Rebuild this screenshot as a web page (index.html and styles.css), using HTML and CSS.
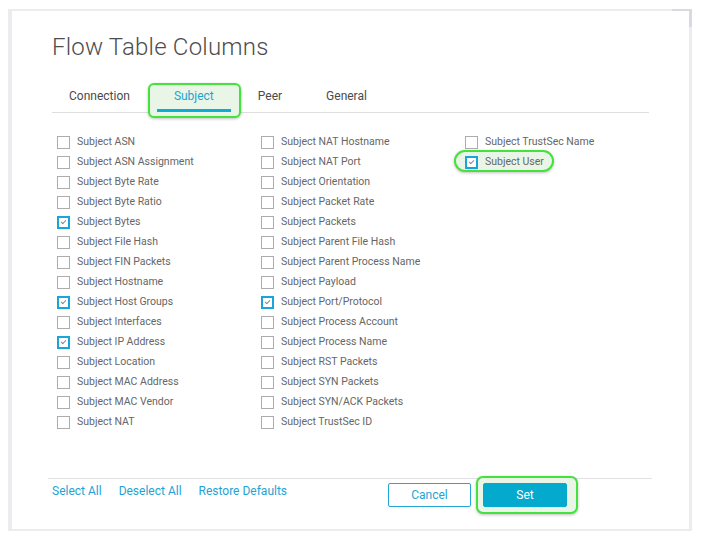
FILE: index.html
```html
<!DOCTYPE html>
<html>
<head>
<meta charset="utf-8">
<link rel="stylesheet" href="styles.css">
</head>
<body>
<div class="frame">
  <div class="scroll-mark"></div>
  <div class="modal">
    <h1 class="title">Flow Table Columns</h1>
    <div class="tabs">
      <div class="tab">Connection</div>
      <div class="hl hl-tab"><div class="tab active">Subject</div></div>
      <div class="tab">Peer</div>
      <div class="tab">General</div>
    </div>
    <div class="grid">
      <div class="col">
        <label class="item"><span class="box"></span>Subject ASN</label>
        <label class="item"><span class="box"></span>Subject ASN Assignment</label>
        <label class="item"><span class="box"></span>Subject Byte Rate</label>
        <label class="item"><span class="box"></span>Subject Byte Ratio</label>
        <label class="item"><span class="box on"></span>Subject Bytes</label>
        <label class="item"><span class="box"></span>Subject File Hash</label>
        <label class="item"><span class="box"></span>Subject FIN Packets</label>
        <label class="item"><span class="box"></span>Subject Hostname</label>
        <label class="item"><span class="box on"></span>Subject Host Groups</label>
        <label class="item"><span class="box"></span>Subject Interfaces</label>
        <label class="item"><span class="box on"></span>Subject IP Address</label>
        <label class="item"><span class="box"></span>Subject Location</label>
        <label class="item"><span class="box"></span>Subject MAC Address</label>
        <label class="item"><span class="box"></span>Subject MAC Vendor</label>
        <label class="item"><span class="box"></span>Subject NAT</label>
      </div>
      <div class="col">
        <label class="item"><span class="box"></span>Subject NAT Hostname</label>
        <label class="item"><span class="box"></span>Subject NAT Port</label>
        <label class="item"><span class="box"></span>Subject Orientation</label>
        <label class="item"><span class="box"></span>Subject Packet Rate</label>
        <label class="item"><span class="box"></span>Subject Packets</label>
        <label class="item"><span class="box"></span>Subject Parent File Hash</label>
        <label class="item"><span class="box"></span>Subject Parent Process Name</label>
        <label class="item"><span class="box"></span>Subject Payload</label>
        <label class="item"><span class="box on"></span>Subject Port/Protocol</label>
        <label class="item"><span class="box"></span>Subject Process Account</label>
        <label class="item"><span class="box"></span>Subject Process Name</label>
        <label class="item"><span class="box"></span>Subject RST Packets</label>
        <label class="item"><span class="box"></span>Subject SYN Packets</label>
        <label class="item"><span class="box"></span>Subject SYN/ACK Packets</label>
        <label class="item"><span class="box"></span>Subject TrustSec ID</label>
      </div>
      <div class="col">
        <label class="item"><span class="box"></span>Subject TrustSec Name</label>
        <label class="item hl hl-item"><span class="box on"></span>Subject User</label>
      </div>
    </div>
    <div class="footer">
      <div class="links">
        <a class="link">Select All</a>
        <a class="link">Deselect All</a>
        <a class="link">Restore Defaults</a>
      </div>
      <div class="buttons">
        <button class="btn cancel">Cancel</button>
        <div class="hl hl-btn"><button class="btn set">Set</button></div>
      </div>
    </div>
  </div>
</div>
</body>
</html>
```

FILE: styles.css
```css
html, body {
  background: #ffffff;
}
body {
  margin: 9px 10px 0 8px;
  font-family: Roboto, "Liberation Sans", sans-serif;
}
.frame {
  position: relative;
  height: 518px;
  border-style: solid;
  border-color: #ebebf0;
  border-width: 2px 3px 2px 4px;
  background: #ffffff;
}
.scroll-mark {
  position: absolute;
  top: -2px;
  right: -3px;
  width: 20px;
  height: 2px;
  background: #d9d9df;
}
.scroll-mark::after {
  content: "";
  position: absolute;
  right: 0;
  top: 0;
  width: 3px;
  height: 18px;
  background: #d9d9df;
}
.modal {
  padding: 22px 40px 0 40px;
}
.title {
  margin: 0;
  font-size: 24px;
  line-height: 28px;
  font-weight: 300;
  color: #4d4d4d;
  letter-spacing: 0.2px;
}
.tabs {
  display: flex;
  gap: 10px;
  margin-top: 27px;
  border-bottom: 1px solid #dedede;
}
.tab {
  padding: 0 17px 5px 17px;
  font-size: 12px;
  line-height: 16px;
  color: #4a4a4a;
  border-bottom: 3px solid transparent;
}
.tab.active {
  color: #1ea3cf;
  border-bottom-color: #0aaed2;
}
.hl {
  position: relative;
  z-index: 0;
}
.hl::before {
  content: "";
  position: absolute;
  z-index: -1;
  border: 2px solid #44e23a;
  border-radius: 6px;
  background: #e9f6e7;
  box-shadow: 0 1px 3px rgba(0,0,0,0.25);
}
.hl-tab::before {
  top: -5px;
  bottom: -6px;
  left: -9px;
  right: -10px;
}
.grid {
  display: grid;
  grid-template-columns: 204px 204px 204px;
  padding-left: 5px;
  margin-top: 18px;
}
.col {
  display: flex;
  flex-direction: column;
  align-items: flex-start;
}
.item {
  display: flex;
  align-items: center;
  height: 20px;
  font-size: 10.5px;
  color: #666666;
}
.box {
  position: relative;
  box-sizing: border-box;
  width: 13px;
  height: 13px;
  margin: 2px 7px 0 0;
  border: 1.5px solid #acacac;
  background: #ffffff;
}
.box.on {
  border: 2px solid #1aa5da;
}
.box.on::after {
  content: "";
  position: absolute;
  left: 2px;
  top: 2px;
  width: 4px;
  height: 2px;
  border-left: 1px solid #8a8a8a;
  border-bottom: 1px solid #8a8a8a;
  transform: rotate(-45deg);
}
.hl-item::before {
  top: -1px;
  bottom: -1px;
  left: -11px;
  right: -10px;
  border-radius: 11px;
}
.footer {
  display: flex;
  align-items: flex-start;
  margin: 47px -3px 0 -4px;
  padding: 4px 0 0 4px;
  border-top: 1px solid #e2e2e6;
}
.links {
  display: flex;
  gap: 17px;
}
.link {
  font-size: 12px;
  line-height: 16px;
  color: #1ea3d6;
  cursor: pointer;
}
.buttons {
  display: flex;
  gap: 12px;
  margin-left: auto;
  margin-right: 85px;
}
.btn {
  display: block;
  box-sizing: border-box;
  width: 83px;
  height: 24px;
  border-radius: 2px;
  font-family: Roboto, "Liberation Sans", sans-serif;
  font-size: 12px;
  padding: 0;
}
.cancel {
  background: #ffffff;
  border: 1px solid #22a6d6;
  color: #1ea3d6;
}
.set {
  width: 84px;
  background: #03aace;
  border: 1px solid #03aace;
  color: #ffffff;
}
.hl-btn::before {
  top: -7px;
  bottom: -7px;
  left: -7px;
  right: -11px;
  border-radius: 7px;
}
```
